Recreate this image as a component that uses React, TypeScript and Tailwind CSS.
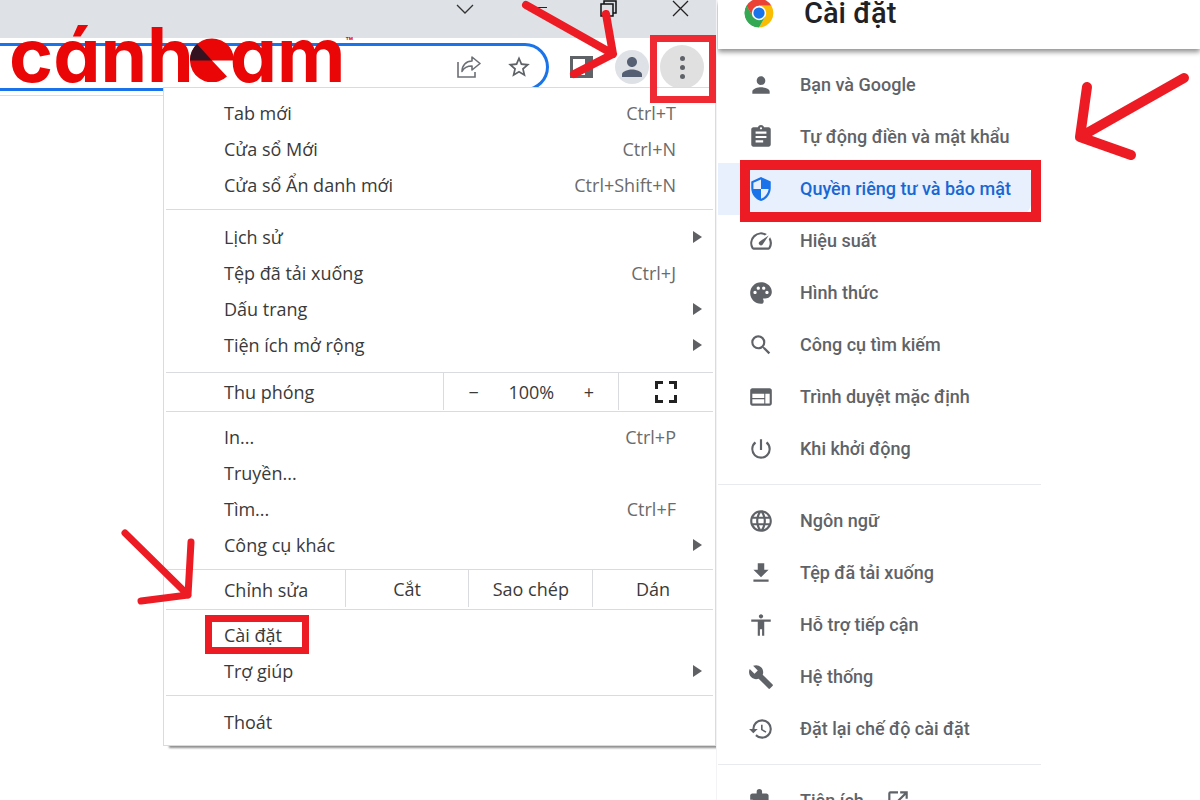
import type { ReactNode } from "react";
import type { IconType } from "react-icons";
import {
  MdAccessibility,
  MdAssignment,
  MdBuild,
  MdDownload,
  MdExtension,
  MdHistory,
  MdLanguage,
  MdOpenInNew,
  MdPalette,
  MdPerson,
  MdPowerSettingsNew,
  MdSearch,
  MdSecurity,
  MdSpeed,
  MdStarBorder,
  MdWeb,
} from "react-icons/md";

interface MenuItemProps {
  label: string;
  shortcut?: string;
  hasSubmenu?: boolean;
  isMarked?: boolean;
}

interface NavItemProps {
  label: string;
  Icon: IconType;
  isActive?: boolean;
  isExternal?: boolean;
}

const TAB_ITEMS: MenuItemProps[] = [
  { label: "Tab mới", shortcut: "Ctrl+T" },
  { label: "Cửa sổ Mới", shortcut: "Ctrl+N" },
  { label: "Cửa sổ Ẩn danh mới", shortcut: "Ctrl+Shift+N" },
];

const LIBRARY_ITEMS: MenuItemProps[] = [
  { label: "Lịch sử", hasSubmenu: true },
  { label: "Tệp đã tải xuống", shortcut: "Ctrl+J" },
  { label: "Dấu trang", hasSubmenu: true },
  { label: "Tiện ích mở rộng", hasSubmenu: true },
];

const TOOL_ITEMS: MenuItemProps[] = [
  { label: "In...", shortcut: "Ctrl+P" },
  { label: "Truyền..." },
  { label: "Tìm...", shortcut: "Ctrl+F" },
  { label: "Công cụ khác", hasSubmenu: true },
];

const SETTINGS_ITEMS: MenuItemProps[] = [
  { label: "Cài đặt", isMarked: true },
  { label: "Trợ giúp", hasSubmenu: true },
];

const MAIN_NAV: NavItemProps[] = [
  { label: "Bạn và Google", Icon: MdPerson },
  { label: "Tự động điền và mật khẩu", Icon: MdAssignment },
  { label: "Quyền riêng tư và bảo mật", Icon: MdSecurity, isActive: true },
  { label: "Hiệu suất", Icon: MdSpeed },
  { label: "Hình thức", Icon: MdPalette },
  { label: "Công cụ tìm kiếm", Icon: MdSearch },
  { label: "Trình duyệt mặc định", Icon: MdWeb },
  { label: "Khi khởi động", Icon: MdPowerSettingsNew },
];

const ADVANCED_NAV: NavItemProps[] = [
  { label: "Ngôn ngữ", Icon: MdLanguage },
  { label: "Tệp đã tải xuống", Icon: MdDownload },
  { label: "Hỗ trợ tiếp cận", Icon: MdAccessibility },
  { label: "Hệ thống", Icon: MdBuild },
  { label: "Đặt lại chế độ cài đặt", Icon: MdHistory },
];

const EXTRA_NAV: NavItemProps[] = [
  { label: "Tiện ích", Icon: MdExtension, isExternal: true },
];

const BrandLogo = () => (
  <div
    role="img"
    aria-label="cánheam"
    className="absolute left-[9px] top-[11px] z-10 flex items-start font-[Inter,sans-serif] text-[75px] leading-[88px] font-bold text-[#ea0606] [font-feature-settings:'cv11']"
  >
    <span>cánh</span>
    <svg viewBox="0 0 44 44" className="-mx-1 mt-[27px] w-11">
      <path d="M22 22.500H44A22 22 0 1 0 37 38.500Z" fill="#ea0606" />
      <path d="M22 22.500H0A22 22 0 0 1 7 6Z" fill="#35121f" />
    </svg>
    <span>am</span>
    <span className="mt-[24px] text-[12px] leading-[14px]">™</span>
  </div>
);

const ShareIcon = () => (
  <svg viewBox="0 0 24 24" className="w-6" fill="none" stroke="#6b6f74" strokeWidth="1.600">
    <path d="M1 7v15h17v-5" />
    <path d="M15 2l8 6.500-8 6.500v-4c-5 0-8 1.500-10 5.500 0-6 4-10.500 10-10.500z" strokeLinejoin="round" />
  </svg>
);

const SidePanelIcon = () => (
  <svg viewBox="0 0 23 22" className="w-[23px]">
    <path d="M0 0h23v22H0zM3 3v16h12V3z" fill="#5f6368" fillRule="evenodd" />
  </svg>
);

const FullscreenIcon = () => (
  <svg viewBox="0 0 22 22" className="w-[22px]" fill="none" stroke="#222" strokeWidth="3">
    <path d="M1.500 8V1.500H8M14 1.500h6.500V8M20.500 14v6.500H14M8 20.500H1.500V14" />
  </svg>
);

const ChromeLogo = () => (
  <svg viewBox="0 0 48 48" className="w-[30px]">
    <circle cx="24" cy="24" r="23" fill="#fff" />
    <path d="M24 24 4.100 12.500A23 23 0 0 1 43.900 12.500H24Z" fill="#ea4335" />
    <path d="M43.900 12.500A23 23 0 0 1 24 47L34 29.800 24 12.500Z" fill="#fbbc04" />
    <path d="M4.100 12.500A23 23 0 0 0 24 47L34 29.800 14 29.800Z" fill="#34a853" />
    <path d="M4.100 12.500 14 29.800 24 24V12.500Z" fill="#ea4335" />
    <path d="M4.100 12.500 14 29.800A11.500 11.500 0 0 0 24 35.500L17.500 46A23 23 0 0 1 4.100 12.500Z" fill="#34a853" />
    <circle cx="24" cy="24" r="11.500" fill="#fff" />
    <circle cx="24" cy="24" r="9" fill="#1a73e8" />
  </svg>
);

const MenuItem = ({ label, shortcut, hasSubmenu, isMarked }: MenuItemProps) => (
  <button
    type="button"
    role="menuitem"
    className="relative flex h-9 w-full items-center justify-between pl-[58px] text-left hover:bg-[#f1f3f4]"
  >
    <span>{label}</span>
    {shortcut && <span className="pr-[37px] text-[#6b6b6b]">{shortcut}</span>}
    {hasSubmenu && (
      <svg viewBox="0 0 9 12" className="mr-[11px] w-[9px]">
        <path d="M0 0l9 6-9 6z" fill="#5f6063" />
      </svg>
    )}
    {isMarked && (
      <span className="absolute -top-[2px] left-[39px] h-[39px] w-[104px] border-[7px] border-[#ed1c24]" />
    )}
  </button>
);

const MenuGroup = ({ items }: { items: MenuItemProps[] }) => (
  <div className="pt-[7px] pb-[6px]">
    {items.map((item) => (
      <MenuItem key={item.label} {...item} />
    ))}
  </div>
);

const MenuCell = ({ children }: { children: ReactNode }) => (
  <button
    type="button"
    role="menuitem"
    className="flex h-[37px] items-center justify-center border-l border-[#d9dbdf] hover:bg-[#f1f3f4]"
  >
    {children}
  </button>
);

const BrowserMenu = () => (
  <div
    role="menu"
    className="relative z-0 -mt-[9px] ml-[163px] divide-y divide-[#d9dbdf] border border-[#d9dbe0] bg-white px-[2px] font-['Open_Sans','Noto_Sans',sans-serif] text-[18px] leading-6 text-[#3a3a3a] shadow-[5px_3px_2px_-1px_#8f8f8f]"
  >
    <MenuGroup items={TAB_ITEMS} />
    <div className="pt-[2px] pb-[3px]">
      <MenuGroup items={LIBRARY_ITEMS} />
    </div>
    <div className="grid grid-cols-[278fr_175fr_95fr]">
      <span className="flex h-[38px] items-center pl-[58px]">Thu phóng</span>
      <div className="flex h-[37px] items-center justify-between border-l border-[#d9dbdf] px-6">
        <button type="button" aria-label="Thu nhỏ">
          −
        </button>
        <span>100%</span>
        <button type="button" aria-label="Phóng to">
          +
        </button>
      </div>
      <MenuCell>
        <FullscreenIcon />
      </MenuCell>
    </div>
    <MenuGroup items={TOOL_ITEMS} />
    <div className="grid grid-cols-[179fr_124fr_124fr_121fr]">
      <span className="flex h-[39px] items-center pl-[58px]">Chỉnh sửa</span>
      <MenuCell>Cắt</MenuCell>
      <MenuCell>Sao chép</MenuCell>
      <MenuCell>Dán</MenuCell>
    </div>
    <MenuGroup items={SETTINGS_ITEMS} />
    <div className="pt-2 pb-[5px]">
      <MenuItem label="Thoát" />
    </div>
  </div>
);

const WindowControls = () => (
  <div className="flex h-[38px] justify-end bg-[#dee1e6]">
    <button type="button" aria-label="Tìm kiếm thẻ" className="flex w-[82px] justify-center pt-1">
      <svg viewBox="0 0 18 10" className="h-[10px] w-[18px]" fill="none" stroke="#333" strokeWidth="1.300">
        <path d="M1 1l8 8 8-8" />
      </svg>
    </button>
    <button type="button" aria-label="Thu nhỏ cửa sổ" className="flex w-[66px] justify-center pt-[7px]">
      <span className="h-px w-4 bg-[#222]" />
    </button>
    <button type="button" aria-label="Khôi phục" className="flex w-[72px] justify-center">
      <svg viewBox="0 0 17 17" className="h-[17px] w-[17px]" fill="none" stroke="#111" strokeWidth="1.500">
        <path d="M1 4h12v12H1zM4 4V1h12v12h-3" />
      </svg>
    </button>
    <button type="button" aria-label="Đóng" className="flex w-[72px] justify-center">
      <svg viewBox="0 0 17 17" className="h-[17px] w-[17px]" stroke="#222" strokeWidth="1.300">
        <path d="M1 1l15 15M16 1L1 16" />
      </svg>
    </button>
  </div>
);

const Toolbar = () => (
  <div className="flex h-[58px] items-start border-b border-[#dcdee2] bg-white pt-[5px]">
    <div className="flex h-12 flex-1 items-center justify-end gap-[25px] rounded-r-full border-[3px] border-l-0 border-[#1a73e8] pr-[14px]">
      <button type="button" aria-label="Chia sẻ">
        <ShareIcon />
      </button>
      <button type="button" aria-label="Dấu trang">
        <MdStarBorder className="text-[26px] text-[#5f6368]" />
      </button>
    </div>
    <div className="flex h-12 items-center">
      <button type="button" aria-label="Bảng điều khiển bên" className="ml-[21px]">
        <SidePanelIcon />
      </button>
      <button
        type="button"
        aria-label="Hồ sơ"
        className="ml-[22px] flex size-[34px] items-center justify-center rounded-full bg-[#dee1e6]"
      >
        <MdPerson className="text-[30px] text-[#566074]" />
      </button>
      <div className="relative mr-3 ml-[11px]">
        <button
          type="button"
          aria-label="Tùy chỉnh và điều khiển"
          className="flex size-11 flex-col items-center justify-center gap-1 rounded-full bg-[#e0e0e0]"
        >
          <span className="size-[5px] rounded-full bg-[#5f6368]" />
          <span className="size-[5px] rounded-full bg-[#5f6368]" />
          <span className="size-[5px] rounded-full bg-[#5f6368]" />
        </button>
        <span className="pointer-events-none absolute -top-[10px] -left-[10px] z-10 h-[68px] w-[66px] border-[7px] border-[#f02a33]" />
      </div>
    </div>
  </div>
);

const NavItem = ({ label, Icon, isActive, isExternal }: NavItemProps) => (
  <li className="relative">
    <a
      href="#"
      className={
        isActive
          ? "mr-[10px] flex h-[52px] items-center rounded-r-xl bg-[#e8f0fe] pl-[30px] text-[#1967d2]"
          : "flex h-[52px] items-center pl-[30px] text-[#5f6368]"
      }
    >
      <Icon className={isActive ? "text-[26px] text-[#1a73e8]" : "text-[26px]"} />
      <span className="ml-[26px]">{label}</span>
      {isExternal && <MdOpenInNew className="ml-[21px] text-[26px]" />}
    </a>
    {isActive && (
      <span className="pointer-events-none absolute -top-[3px] right-0 -bottom-[7px] left-[22px] border-[10px] border-[#ed1c24]" />
    )}
  </li>
);

const NavGroup = ({ items }: { items: NavItemProps[] }) => (
  <ul className="border-b border-[#e8eaed] pt-[10px] pb-[9px]">
    {items.map((item) => (
      <NavItem key={item.label} {...item} />
    ))}
  </ul>
);

const SettingsPanel = () => (
  <section className="relative overflow-hidden border-l border-[#f3f3f5] bg-white pl-px font-[Roboto,sans-serif]">
    <header className="flex h-[49px] items-start gap-[30px] pl-[26px] shadow-[0_3px_5px_0_#909090]">
      <div className="-mt-[2px]">
        <ChromeLogo />
      </div>
      <h1 className="text-[29px] leading-[26px] font-medium text-[#202124]">Cài đặt</h1>
    </header>
    <nav className="w-[67%] text-[18px] leading-6 font-medium">
      <NavGroup items={MAIN_NAV} />
      <NavGroup items={ADVANCED_NAV} />
      <NavGroup items={EXTRA_NAV} />
    </nav>
    <svg
      viewBox="0 0 120 92"
      className="pointer-events-none absolute top-[70px] right-[8px] w-[120px]"
      fill="none"
      stroke="#ed1c24"
      strokeWidth="10"
      strokeLinecap="round"
      strokeLinejoin="round"
    >
      <path d="M112 8L8 67M15 17L8 67L59 85" />
    </svg>
  </section>
);

export default function App() {
  return (
    <main className="grid h-screen grid-cols-[716fr_484fr] overflow-hidden bg-white">
      <section className="relative overflow-hidden">
        <WindowControls />
        <Toolbar />
        <BrowserMenu />
        <BrandLogo />
        <svg
          viewBox="0 0 100 84"
          className="pointer-events-none absolute top-0 right-[96px] z-10 w-[100px]"
          fill="none"
          stroke="#ed1c24"
          strokeWidth="8"
          strokeLinecap="round"
          strokeLinejoin="round"
        >
          <path d="M6 5L93 54M86 14L93 54L54 74" />
        </svg>
        <svg
          viewBox="0 0 80 80"
          className="pointer-events-none absolute top-[528px] left-[118px] z-10 w-20"
          fill="none"
          stroke="#ed1c24"
          strokeWidth="7"
          strokeLinecap="round"
          strokeLinejoin="round"
        >
          <path d="M7 5L70 67M73 14L70 67L23 73" />
        </svg>
      </section>
      <SettingsPanel />
    </main>
  );
}
